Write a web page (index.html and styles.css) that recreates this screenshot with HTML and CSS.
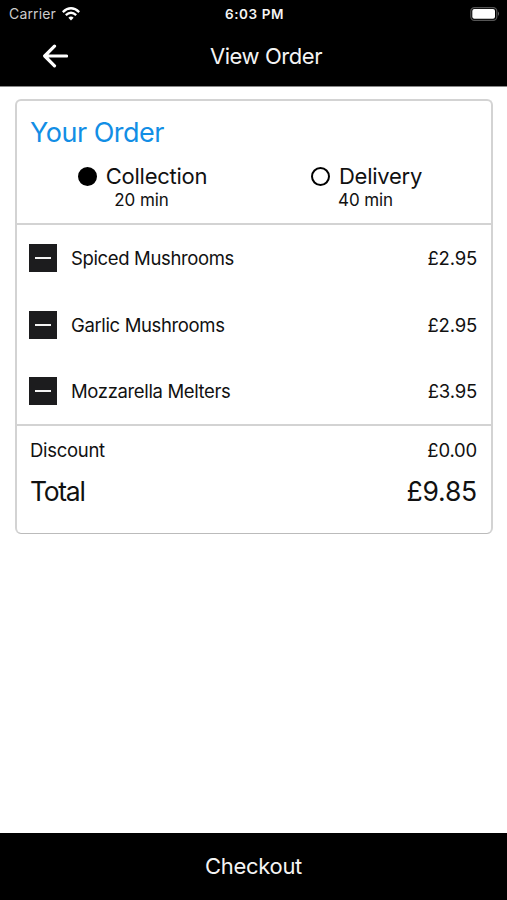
FILE: index.html
```html
<!DOCTYPE html>
<html lang="en">
<head>
<meta charset="utf-8">
<title>View Order</title>
<link rel="stylesheet" href="styles.css">
</head>
<body>
<div class="screen">
  <header class="header">
    <div class="status">
      <div class="carrier"><span class="carrier-name">Carrier</span>
        <svg class="wifi" viewBox="0 0 18 14"><path d="M.8 5.1Q9-2.6 17.2 5.1M3.8 8.2Q9 3.2 14.2 8.2" fill="none" stroke="#fff" stroke-width="2.3"/><path d="M9 13.6 6.4 10.8Q9 8.4 11.6 10.8Z" fill="#fff"/></svg>
      </div>
      <span class="time">6:03 PM</span>
      <svg class="battery" viewBox="0 0 30 14"><rect x=".8" y=".6" width="26" height="12.8" rx="3.6" fill="none" stroke="#555" stroke-width="1.2"/><rect x="2.3" y="2" width="22.7" height="9.8" rx="2" fill="#fff"/><path d="M28 4.6q2 2.2 0 4.4z" fill="#666"/></svg>
    </div>
    <nav class="nav">
      <svg class="back" viewBox="0 0 26 24"><path d="M24.5 12H3M12.5 2.2 2.7 12l9.8 9.8" fill="none" stroke="#fff" stroke-width="3.2" stroke-linecap="round" stroke-linejoin="round"/></svg>
      <h1 class="title">View Order</h1>
    </nav>
  </header>
  <main class="content">
    <section class="card">
      <div class="order-head">
        <h2 class="heading">Your Order</h2>
        <div class="options">
          <div class="option"><div class="choice"><i class="radio radio-on"></i><span>Collection</span></div><span class="eta">20 min</span></div>
          <div class="option"><div class="choice"><i class="radio"></i><span>Delivery</span></div><span class="eta">40 min</span></div>
        </div>
      </div>
      <ul class="items">
        <li class="item"><i class="minus"></i><span class="name">Spiced Mushrooms</span><span class="price">£2.95</span></li>
        <li class="item"><i class="minus"></i><span class="name">Garlic Mushrooms</span><span class="price">£2.95</span></li>
        <li class="item"><i class="minus"></i><span class="name">Mozzarella Melters</span><span class="price">£3.95</span></li>
      </ul>
      <div class="summary">
        <div class="row discount"><span>Discount</span><span class="amount">£0.00</span></div>
        <div class="row total"><span class="total-label">Total</span><span>£9.85</span></div>
      </div>
    </section>
  </main>
  <footer class="checkout">Checkout</footer>
</div>
</body>
</html>
```
FILE: styles.css
```css
* { box-sizing: border-box; margin: 0; padding: 0; }
body { font-family: Inter, sans-serif; color: #111; background: #fff; }
.screen { height: 900px; display: flex; flex-direction: column; }
.header { height: 87px; background: #000; color: #f4f4f4; border-bottom: 1px solid #888; }
.status { height: 27px; display: grid; grid-template-columns: 1fr auto 1fr; align-items: center; padding: 0 7px 0 9px; }
.carrier { display: flex; align-items: center; gap: 6px; font-size: 14px; letter-spacing: .15px; color: #ccc; }
.wifi { width: 18px; height: 14px; }
.time { font-size: 13.5px; font-weight: 600; letter-spacing: .6px; }
.battery { width: 30px; height: 14px; justify-self: end; }
.nav { height: 58px; display: grid; grid-template-columns: 68px 1fr 43px; align-items: center; }
.back { width: 26px; height: 24px; margin-left: 42px; }
.title { font-size: 22px; font-weight: 400; text-align: center; letter-spacing: -.45px; }
.content { flex: 1; padding: 12px 14px 0 15px; }
.card { height: 435px; border: 2px solid #d3d3d3; border-bottom: 1px solid #bbb; border-radius: 6px; }
.order-head { height: 124px; padding: 14px 13px 0; border-bottom: 2px solid #d3d3d3; }
.heading { font-size: 27px; line-height: 36px; font-weight: 400; letter-spacing: -.5px; color: #128ee5; }
.options { display: grid; grid-template-columns: 1fr 1fr; margin-top: 11px; }
.option { display: flex; flex-direction: column; align-items: center; }
.choice { display: flex; align-items: center; gap: 9px; font-size: 22px; line-height: 28px; letter-spacing: -.25px; margin-left: 1px; }
.radio { width: 19px; height: 19px; border: 2px solid #000; border-radius: 50%; }
.radio-on { background: #000; }
.eta { font-size: 17px; line-height: 20px; letter-spacing: -.1px; margin-right: 1px; }
.items { height: 201px; list-style: none; padding: 0 14px 0 12px; border-bottom: 2px solid #d3d3d3; }
.item { height: 66.5px; display: flex; align-items: center; font-size: 18.5px; letter-spacing: -.36px; }
.minus { width: 28px; height: 28px; background: #1c1c1e; display: grid; place-items: center; margin-right: 14px; }
.minus::before { content: ""; width: 16px; height: 2px; background: #f4f4f4; }
.price { margin-left: auto; }
.price, .amount { letter-spacing: -.2px; }
.summary { padding: 11px 14px 0 13px; }
.row { display: flex; justify-content: space-between; }
.discount { font-size: 18.5px; line-height: 26px; letter-spacing: -.3px; }
.total { font-size: 26.5px; line-height: 34px; margin-top: 11px; letter-spacing: -.2px; }
.total-label { letter-spacing: -1.3px; }
.checkout { height: 67px; background: #000; color: #f4f4f4; text-align: center; font-size: 22px; line-height: 67px; letter-spacing: -.3px; }
```
